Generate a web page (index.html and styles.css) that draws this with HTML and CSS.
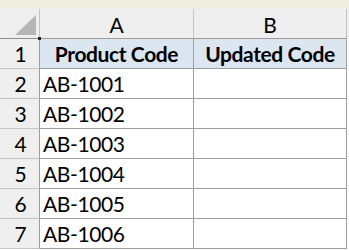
FILE: index.html
```html
<!DOCTYPE html>
<html>
<head>
<meta charset="utf-8">
<link rel="stylesheet" href="styles.css">
</head>
<body>
<div class="sheet">
  <div class="topbar"></div>
  <div class="grid">
    <div class="corner"><svg class="tri" width="21" height="20" viewBox="0 0 21 20"><polygon points="0,20 21,0 21,20" fill="#b5b5b5"/></svg><span class="selmark"></span></div>
    <div class="colhead">A</div>
    <div class="colhead">B</div>
    <div class="edge head-edge"></div>

    <div class="rowhead">1</div>
    <div class="cell title">Product Code</div>
    <div class="cell title">Updated Code</div>
    <div class="edge"></div>

    <div class="rowhead">2</div>
    <div class="cell">AB-1001</div>
    <div class="cell"></div>
    <div class="edge"></div>

    <div class="rowhead">3</div>
    <div class="cell">AB-1002</div>
    <div class="cell"></div>
    <div class="edge"></div>

    <div class="rowhead">4</div>
    <div class="cell">AB-1003</div>
    <div class="cell"></div>
    <div class="edge"></div>

    <div class="rowhead">5</div>
    <div class="cell">AB-1004</div>
    <div class="cell"></div>
    <div class="edge"></div>

    <div class="rowhead">6</div>
    <div class="cell">AB-1005</div>
    <div class="cell"></div>
    <div class="edge"></div>

    <div class="rowhead">7</div>
    <div class="cell">AB-1006</div>
    <div class="cell"></div>
    <div class="edge"></div>
  </div>
</div>
</body>
</html>
```
FILE: styles.css
```css
* { box-sizing: border-box; }
html, body { margin: 0; padding: 0; background: #ffffff; }
body { width: 349px; height: 250px; overflow: hidden; font-family: "Lato", "Noto Sans", sans-serif; color: #000; }
.sheet { display: flex; flex-direction: column; }
.topbar { height: 9px; background: #efede0; }
.grid {
  display: grid;
  grid-template-columns: 40px 154px 153px 2px;
  grid-template-rows: 30px repeat(7, 30px);
}
.corner {
  position: relative;
  background: #efefef;
  border-right: 1px solid #c4c4c4;
  border-bottom: 1px solid #8f8f8f;
  display: flex;
  align-items: flex-start;
  justify-content: flex-start;
  padding: 6px 0 0 15px;
}
.selmark {
  position: absolute;
  right: -2px;
  bottom: -2px;
  width: 3px;
  height: 3px;
  background: #222;
}
.colhead {
  background: #efefef;
  border-right: 1px solid #c4c4c4;
  border-bottom: 1px solid #9b9b9b;
  display: flex;
  align-items: center;
  justify-content: center;
  font-size: 21px;
  padding-top: 1px;
}
.edge { background: #ffffff; }
.head-edge { background: #efefef; }
.rowhead {
  background: #efefef;
  border-right: 1px solid #9b9b9b;
  border-bottom: 1px solid #c4c4c4;
  display: flex;
  align-items: center;
  justify-content: center;
  font-size: 21px;
  padding-left: 2px;
}
.cell {
  border-right: 1px solid #9e9e9e;
  border-bottom: 1px solid #9e9e9e;
  display: flex;
  align-items: center;
  padding-left: 3px;
  font-size: 21px;
  letter-spacing: -0.4px;
  white-space: nowrap;
}
.title {
  background: #dce6f1;
  justify-content: center;
  font-weight: bold;
  padding-left: 0;
}
```
